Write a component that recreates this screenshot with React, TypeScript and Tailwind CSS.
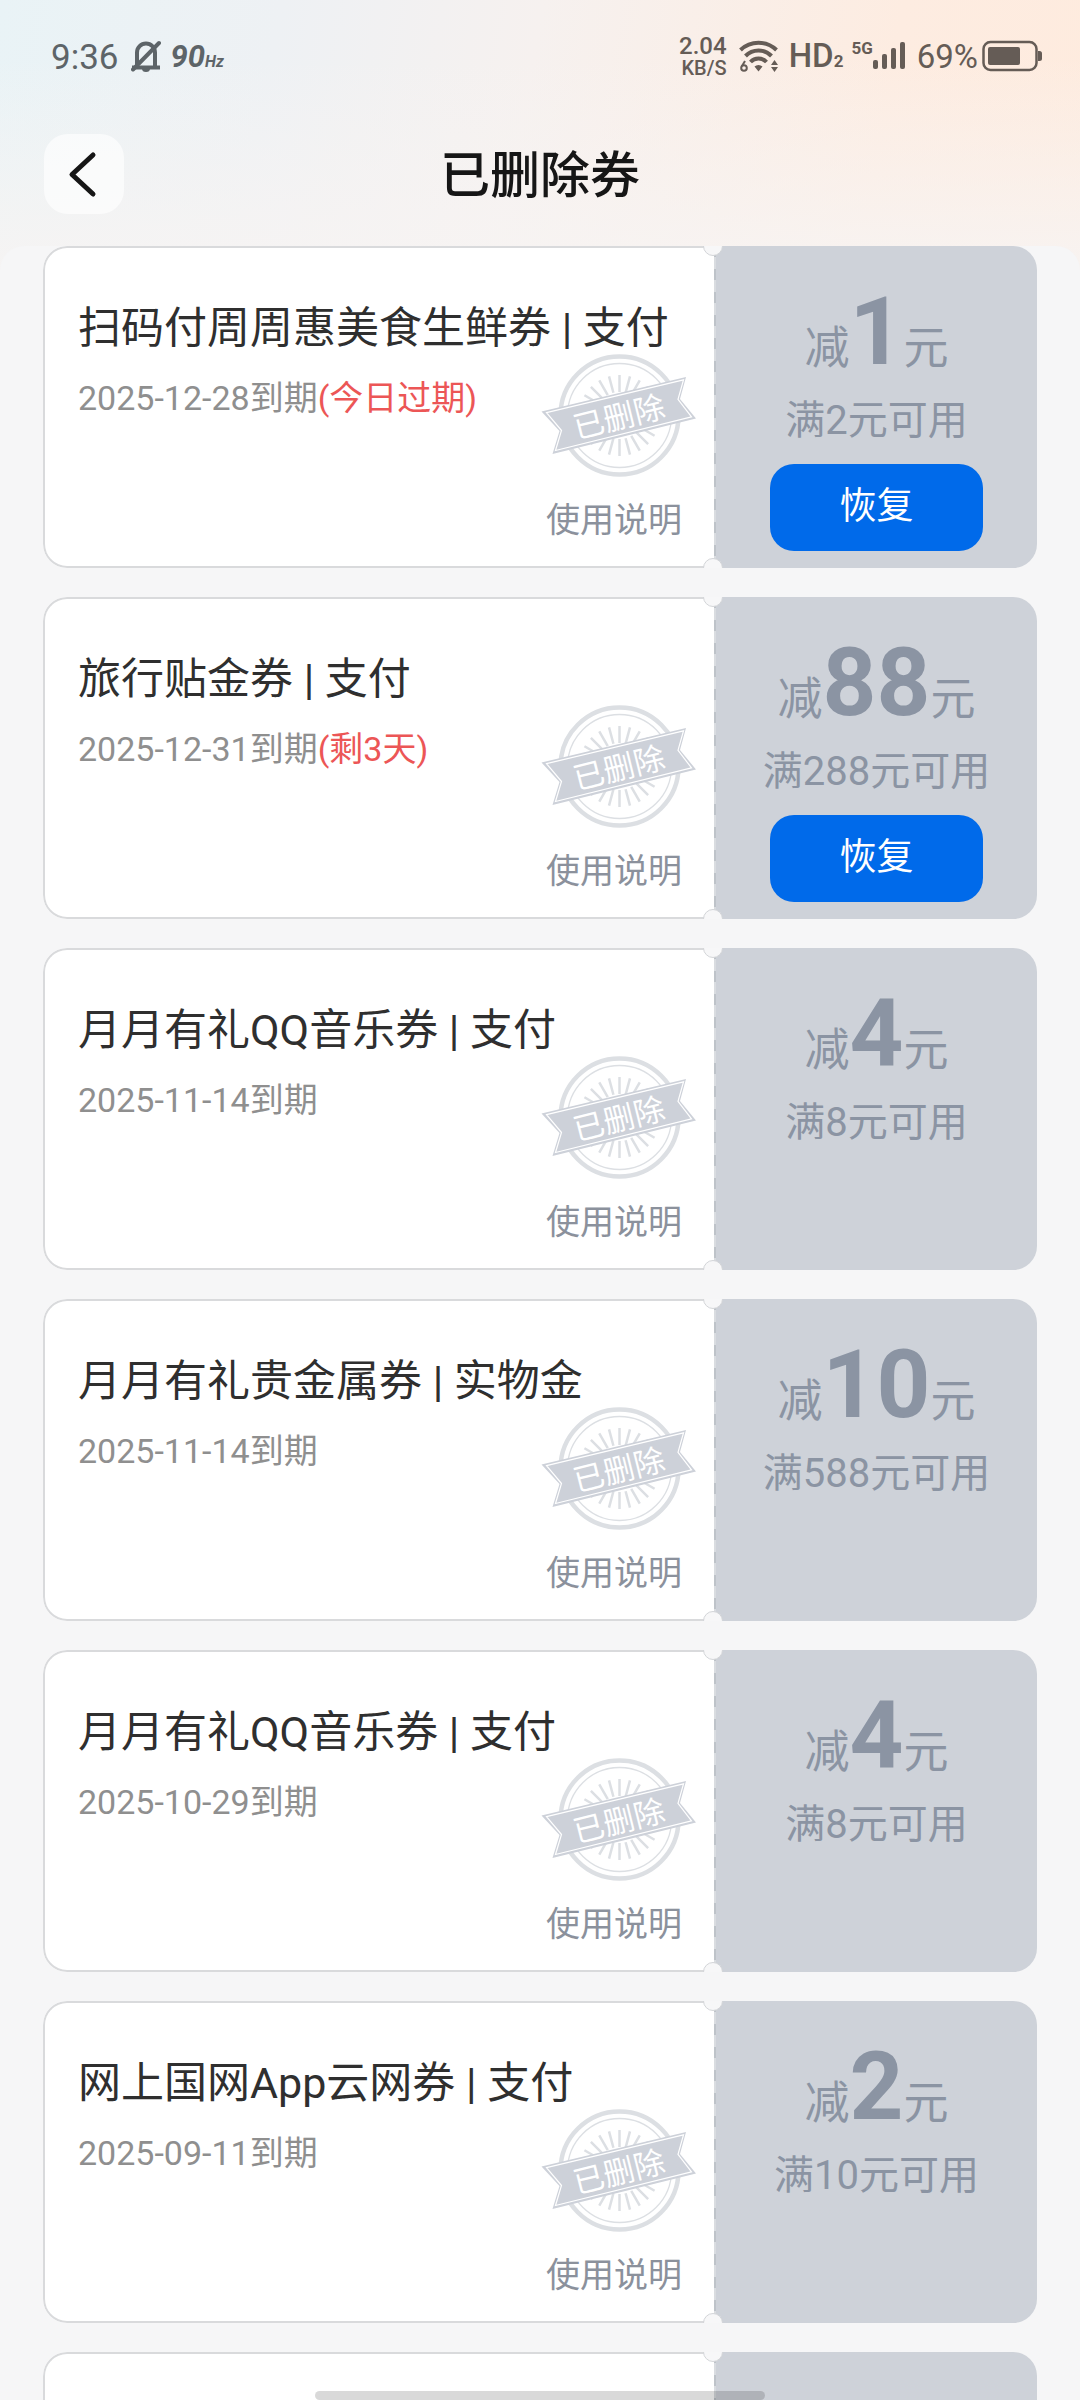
import { ReactNode } from 'react';

type Coupon = {
  id: number;
  title: string;
  date: string;
  note?: string;
  amount: number;
  threshold: number;
};

const coupons: Coupon[] = [
  { id: 1, title: '扫码付周周惠美食生鲜券 | 支付', date: '2025-12-28', note: '(今日过期)', amount: 1, threshold: 2 },
  { id: 2, title: '旅行贴金券 | 支付', date: '2025-12-31', note: '(剩3天)', amount: 88, threshold: 288 },
  { id: 3, title: '月月有礼QQ音乐券 | 支付', date: '2025-11-14', amount: 4, threshold: 8 },
  { id: 4, title: '月月有礼贵金属券 | 实物金', date: '2025-11-14', amount: 10, threshold: 588 },
  { id: 5, title: '月月有礼QQ音乐券 | 支付', date: '2025-10-29', amount: 4, threshold: 8 },
  { id: 6, title: '网上国网App云网券 | 支付', date: '2025-09-11', amount: 2, threshold: 10 },
];

function StatusBar() {
  return (
    <div className="flex h-28 items-center justify-between pl-[51px] pr-[38px]">
      <div className="flex items-center text-[#5d6468]">
        <span className="pt-1 text-[35px] leading-10">9:36</span>
        <svg className="ml-3 h-8 w-[30px]" viewBox="0 0 30 32" fill="none" stroke="currentColor" strokeWidth="4">
          <path d="M1 27.5h28" />
          <path d="M6 27V12.5a9 9 0 0 1 18 0V27" />
          <path d="M2 29.5 28 3" strokeLinecap="round" />
          <path d="M11 28.5h8a4 3.5 0 0 1-8 0z" fill="currentColor" stroke="none" />
        </svg>
        <span className="ml-[10px] flex items-baseline pt-[2px] font-bold italic">
          <span className="text-[31px] leading-10">90</span>
          <span className="text-[16px]">Hz</span>
        </span>
      </div>
      <div className="flex items-center text-[#655c56]">
        <div className="text-right font-medium">
          <div className="text-[24px] leading-6">2.04</div>
          <div className="text-[20px] leading-5">KB/S</div>
        </div>
        <svg className="ml-3 h-8 w-10" viewBox="0 0 40 32" fill="none" stroke="currentColor" strokeWidth="4">
          <path d="M1.5 10a26 26 0 0 1 36 0" />
          <path d="M6.5 16a18 18 0 0 1 26 0" />
          <path d="M11.5 22a11 11 0 0 1 16 0" />
          <path d="M19.5 31.5l-4-5a6 6 0 0 1 8 0zM35.5 20l3.5 5h-7zM35.5 32l3.5-5h-7z" fill="currentColor" stroke="none" />
          <path d="M6 21l-3 5" strokeWidth="2" />
          <circle cx="5" cy="28" r="2.8" strokeWidth="2" />
        </svg>
        <span className="ml-[10px] flex items-baseline font-medium">
          <span className="text-[33px] leading-10">HD</span>
          <span className="text-[17px] font-bold">2</span>
        </span>
        <span className="ml-2 self-start pt-1 text-[17px] font-bold leading-5">5G</span>
        <svg className="h-7 w-8" viewBox="0 0 32 28" fill="currentColor">
          <rect x="0" y="18" width="5" height="9" rx="2" />
          <rect x="9" y="12" width="5" height="15" rx="2" />
          <rect x="18" y="6" width="5" height="21" rx="2" />
          <rect x="27" y="0" width="5" height="27" rx="2" />
        </svg>
        <span className="ml-3 pt-[2px] text-[33px] leading-10">69%</span>
        <svg className="ml-1 h-8 w-[60px]" viewBox="0 0 60 32">
          <rect x="1.5" y="2" width="53" height="28" rx="7" fill="none" stroke="currentColor" strokeWidth="2.5" />
          <rect x="6" y="7" width="32" height="18" rx="2" fill="currentColor" />
          <path d="M56 11h1.5q2.5 0 2.5 2.5v5q0 2.5-2.5 2.5H56z" fill="currentColor" />
        </svg>
      </div>
    </div>
  );
}

function DeletedStamp() {
  const rays = Array.from({ length: 24 }, (_, i) => i * 15);
  return (
    <svg className="absolute right-1 top-[92px] h-[150px] w-[180px]" viewBox="0 0 180 150" fill="none">
      <circle cx="89.5" cy="75.5" r="59" stroke="#dcdfe3" strokeWidth="4.5" />
      <circle cx="89.5" cy="75.5" r="52" stroke="#dcdfe3" strokeWidth="1.3" />
      {rays.map((deg) => (
        <path key={deg} d="M89.5 52V35" transform={`rotate(${deg} 89.5 75.5)`} stroke="#dcdfe3" strokeWidth="2.5" />
      ))}
      <path d="M11.5 71.5 156 37l-6 22 16 19.5L22.5 114l7-23z" fill="#cdd1d9" />
      <path d="M16.5 72.7 153.5 39.8l-5.5 19.5 13.5 17.5L25.5 110.5l6-20z" stroke="#fff" strokeWidth="1.2" />
      <text x="89" y="88" transform="rotate(-14 89 77)" textAnchor="middle" fill="#fff" className="text-[31px]">
        已删除
      </text>
    </svg>
  );
}

function Ticket({ left, right }: { left?: ReactNode; right?: ReactNode }) {
  return (
    <li className="relative flex min-h-[322px] shrink-0 overflow-hidden rounded-3xl">
      <div className="relative flex min-w-0 flex-1 flex-col rounded-l-3xl border-2 border-r-0 border-[#d9dadc] bg-white pb-[22px] pl-[33px] pr-8 pt-[50px]">
        {left}
      </div>
      {/* 撕票虚线 */}
      <div className="w-[2px] bg-[repeating-linear-gradient(to_bottom,#bec3c9_0_11px,#d9dce0_11px_23px)]" />
      <div className="flex w-[321px] flex-col items-center bg-[#ced2d9] pt-[37px]">{right}</div>
      <i className="absolute -top-[10px] right-[314px] size-5 rounded-full border border-[#d3d5d8] bg-[#f7f7f8]" />
      <i className="absolute -bottom-[10px] right-[314px] size-5 rounded-full border border-[#d3d5d8] bg-[#f7f7f8]" />
    </li>
  );
}

function CouponCard({ coupon }: { coupon: Coupon }) {
  return (
    <Ticket
      left={
        <>
          <h2 className="whitespace-nowrap text-[43px] leading-[60px] text-[#2f2f2f]">{coupon.title}</h2>
          <p className="mt-4 text-[34px] leading-[48px] text-[#8f8f8f]">
            {coupon.date}到期
            {coupon.note && <span className="text-[#ec5656]">{coupon.note}</span>}
          </p>
          <DeletedStamp />
          <button className="mt-auto self-end text-[34px] leading-[48px] text-[#8b919c]">使用说明</button>
        </>
      }
      right={
        <>
          <p className="flex h-[100px] items-baseline text-[45px] leading-[98px] text-[#8b94a3]">
            减<strong className="text-[94px] font-bold">{coupon.amount}</strong>元
          </p>
          <p className="mt-3 text-[40px] leading-[52px] text-[#8b94a3]">满{coupon.threshold}元可用</p>
          {coupon.note && (
            <button className="mt-[17px] h-[87px] w-[213px] rounded-3xl bg-[#006aea] pb-[2px] text-[37px] text-white">
              恢复
            </button>
          )}
        </>
      }
    />
  );
}

export default function App() {
  return (
    <div className="relative flex h-screen flex-col overflow-hidden bg-[#f6f6f7] font-[Roboto,'Noto_Sans_CJK_SC',sans-serif]">
      <div className="absolute inset-x-0 top-0 h-[290px] bg-[linear-gradient(100deg,#e9f3f6_0%,#eef1f4_25%,#f6f1ef_48%,#fdece1_80%,#feebde_100%)]" />
      <div className="absolute inset-x-0 top-0 h-[290px] bg-linear-to-b from-transparent from-20% to-[#f7f4f3]" />

      <header className="relative">
        <StatusBar />
        <div className="flex h-[134px] items-start px-11 pt-[22px]">
          <button aria-label="返回" className="flex size-20 items-center justify-center rounded-3xl bg-white/65">
            <svg className="mr-1 h-12 w-8" viewBox="0 0 32 48" fill="none" stroke="#161616" strokeWidth="5">
              <path d="M27 5 6 24.5 27 44" strokeLinecap="round" strokeLinejoin="round" />
            </svg>
          </button>
          <h1 className="flex-1 pt-[2px] text-center text-[50px] font-medium leading-20 text-[#161616]">已删除券</h1>
          <div className="w-20" />
        </div>
      </header>

      <main className="relative min-h-0 flex-1 overflow-y-auto rounded-t-3xl bg-[#f6f6f7] [scrollbar-width:none]">
        <ul className="flex flex-col gap-[29px] px-[43px]">
          {coupons.map((coupon) => (
            <CouponCard key={coupon.id} coupon={coupon} />
          ))}
          <Ticket />
        </ul>
      </main>

      <div className="absolute bottom-0 left-1/2 h-[9px] w-[450px] -translate-x-1/2 rounded-full bg-black/15" />
    </div>
  );
}
